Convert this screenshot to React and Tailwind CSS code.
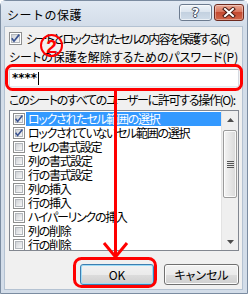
import React from "react";

const items = [
  ["ロックされたセル範囲の選択", true, true],
  ["ロックされていないセル範囲の選択", true, false],
  ["セルの書式設定", false, false],
  ["列の書式設定", false, false],
  ["行の書式設定", false, false],
  ["列の挿入", false, false],
  ["行の挿入", false, false],
  ["ハイパーリンクの挿入", false, false],
  ["列の削除", false, false],
  ["行の削除", false, false],
];

function CheckBox({ checked, small }) {
  return (
    <span
      className={
        small
          ? "relative flex h-[12px] w-[12px] shrink-0 items-center justify-center border border-[#8e8f8f] bg-white"
          : "relative flex h-[13px] w-[13px] shrink-0 items-center justify-center border border-[#8e8f8f] bg-white"
      }
    >
      <span
        className={
          small
            ? "h-[8px] w-[8px] border border-[#b4b8bd] bg-linear-to-br from-[#cfd2d6] to-[#f8f8f8]"
            : "h-[9px] w-[9px] border border-[#b4b8bd] bg-linear-to-br from-[#cfd2d6] to-[#f8f8f8]"
        }
      />
      {checked && (
        <svg
          className="absolute left-0 top-0"
          width={small ? 10 : 11}
          height={small ? 10 : 11}
          viewBox="0 0 11 11"
        >
          <path
            d="M1.8 5.2 L4 8.2 L9.2 1.6"
            stroke="#3a5391"
            strokeWidth="1.7"
            fill="none"
          />
        </svg>
      )}
    </span>
  );
}

function TitleBar() {
  return (
    <div className="flex h-[25px] shrink-0 items-start bg-linear-to-b from-[#e1e9f3] to-[#d3dde9]">
      <span className="ml-[6px] mt-[6px] text-[12px] leading-[16px] tracking-[0.5px] text-black">
        シートの保護
      </span>
      <div className="ml-auto mr-[3px] mt-[3px] flex gap-[2px]">
        <div className="flex h-[17px] w-[33px] items-center justify-center rounded-[3px] border border-[#6c7b8f] bg-[linear-gradient(to_bottom,#eef3f8_0%,#dce5ef_45%,#c3d1e0_50%,#cfdbe8_100%)] shadow-[inset_0_0_0_1px_rgba(255,255,255,0.6)]">
          <span className="font-['DejaVu_Sans',sans-serif] text-[12px] font-bold leading-[12px] text-white [text-shadow:1px_0_0_#3e4c5e,-1px_0_0_#3e4c5e,0_1px_0_#3e4c5e,0_-1px_0_#3e4c5e]">
            ?
          </span>
        </div>
        <div className="flex h-[17px] w-[30px] items-center justify-center rounded-[3px] border border-[#6e2a1f] bg-[linear-gradient(to_bottom,#eaa894_0%,#d9755d_45%,#c44a31_50%,#d0664a_100%)] shadow-[inset_0_0_0_1px_rgba(255,255,255,0.35)]">
          <svg width="14" height="11" viewBox="0 0 14 11">
            <path d="M3 2 L11 9 M11 2 L3 9" stroke="#4a1a12" strokeWidth="4" strokeLinecap="square" />
            <path d="M3 2 L11 9 M11 2 L3 9" stroke="#ffffff" strokeWidth="2" strokeLinecap="square" />
          </svg>
        </div>
      </div>
    </div>
  );
}

function Scrollbar() {
  return (
    <div className="flex w-[17px] shrink-0 flex-col border-l border-[#e3e3e3] bg-[#efefef]">
      <div className="flex h-[17px] shrink-0 items-center justify-center">
        <svg width="7" height="4" viewBox="0 0 7 4">
          <path d="M0 4 L3.5 0 L7 4 Z" fill="#4d4d4d" />
        </svg>
      </div>
      <div className="relative flex-1">
        <div className="mx-[1px] mt-[2px] flex h-[68px] items-center justify-center rounded-[2px] border border-[#9b9b9b] bg-linear-to-r from-[#f4f4f4] to-[#d9d9d9] shadow-[inset_0_0_0_1px_rgba(255,255,255,0.8)]">
          <div className="flex flex-col gap-[1px]">
            <div className="h-[1px] w-[7px] bg-[#555]" />
            <div className="h-[1px] w-[7px] bg-[#555]" />
            <div className="h-[1px] w-[7px] bg-[#555]" />
            <div className="h-[1px] w-[7px] bg-[#555]" />
          </div>
        </div>
      </div>
      <div className="flex h-[17px] shrink-0 items-center justify-center">
        <svg width="7" height="4" viewBox="0 0 7 4">
          <path d="M0 0 L3.5 4 L7 0 Z" fill="#4d4d4d" />
        </svg>
      </div>
    </div>
  );
}

function Annotations() {
  return (
    <svg
      className="pointer-events-none absolute left-0 top-0"
      width="248"
      height="295"
      viewBox="0 0 248 295"
    >
      <rect x="6.5" y="65.5" width="235" height="24" rx="6" fill="none" stroke="#ff0000" strokeWidth="3" />
      <line x1="115.5" y1="90" x2="115.5" y2="256" stroke="#ff0000" strokeWidth="3" />
      <polyline points="104,243 115.5,257 127,243" fill="none" stroke="#ff0000" strokeWidth="3" />
      <rect x="74.5" y="258.5" width="81" height="28" rx="7" fill="none" stroke="#ff0000" strokeWidth="3" />
      <circle cx="51.5" cy="45.5" r="10.5" fill="none" stroke="#ff0000" strokeWidth="2" />
      <text
        x="51.5"
        y="52.5"
        textAnchor="middle"
        fontFamily="Liberation Sans, Arial, sans-serif"
        fontWeight="bold"
        fontSize="19"
        fill="#ff0000"
      >
        2
      </text>
    </svg>
  );
}

export default function App() {
  return (
    <div className="relative h-[295px] w-[248px] overflow-hidden bg-white font-['Noto_Sans_CJK_JP',sans-serif] text-black">
      <div className="flex h-[294px] w-[248px] flex-col rounded-t-[6px] border border-[#7b8ca1] bg-[#d3dde9]">
        <TitleBar />
        <div className="ml-[3px] mr-[4px] flex flex-1 flex-col border border-[#b4c2d2] bg-[#f0f0f0] pl-[4px] pr-[3px] pt-[4px] [font-feature-settings:'palt']">
          <div className="flex h-[15px] shrink-0 items-center">
            <CheckBox checked />
            <span className="ml-[4px] whitespace-nowrap text-[12px] leading-[15px] tracking-[-1.6px]">
              シートとロックされたセルの内容を保護する(C)
            </span>
          </div>
          <div className="mt-[4px] h-[14px] shrink-0 whitespace-nowrap text-[12px] leading-[14px] tracking-[0px]">
            シートの保護を解除するためのパスワード(P)
          </div>
          <div className="mt-[5px] flex h-[18px] shrink-0 items-center border border-[#abadb3] border-b-[#e3e9ef] border-x-[#d5d9e0] bg-white pl-[2px]">
            <span className="font-['DejaVu_Sans',sans-serif] text-[12px] font-bold leading-[16px]">****</span>
            <span className="ml-[1px] h-[13px] w-[1px] bg-black" />
          </div>
          <div className="mt-[6px] h-[14px] shrink-0 whitespace-nowrap text-[12px] leading-[14px] tracking-[-1.3px]">
            このシートのすべてのユーザーに許可する操作(O):
          </div>
          <div className="mt-[3px] flex h-[141px] shrink-0 border border-[#828790] bg-white">
            <div className="flex flex-1 flex-col overflow-hidden pt-[1px]">
              {items.map(([label, checked, selected]) => (
                <div key={label} className="flex h-[14px] shrink-0 items-center">
                  <span className="ml-[3px]">
                    <CheckBox checked={checked} small />
                  </span>
                  <span
                    className={
                      selected
                        ? "ml-[1px] h-[14px] flex-1 whitespace-nowrap bg-[#3399ff] pl-[2px] text-[12px] leading-[14px] tracking-[-1.3px] text-white"
                        : "ml-[1px] h-[14px] flex-1 whitespace-nowrap pl-[2px] text-[12px] leading-[14px] tracking-[-1.3px] text-black"
                    }
                  >
                    {label}
                  </span>
                </div>
              ))}
            </div>
            <Scrollbar />
          </div>
          <div className="mt-[13px] flex shrink-0 justify-end gap-[10px]">
            <button className="flex h-[21px] w-[74px] items-center justify-center rounded-[3px] border border-[#3c7fb1] bg-[linear-gradient(to_bottom,#f2f2f2_0%,#ebebeb_50%,#dddddd_50%,#cfcfcf_100%)] text-[12px] leading-[14px] shadow-[inset_0_0_0_1px_#9fdcf7]">
              OK
            </button>
            <button className="flex h-[21px] w-[75px] items-center justify-center rounded-[3px] border border-[#707070] bg-[linear-gradient(to_bottom,#f2f2f2_0%,#ebebeb_50%,#dddddd_50%,#cfcfcf_100%)] text-[12px] leading-[14px] shadow-[inset_0_0_0_1px_#fcfcfc]">
              キャンセル
            </button>
          </div>
        </div>
        <div className="h-[3px] shrink-0" />
      </div>
      <Annotations />
    </div>
  );
}
